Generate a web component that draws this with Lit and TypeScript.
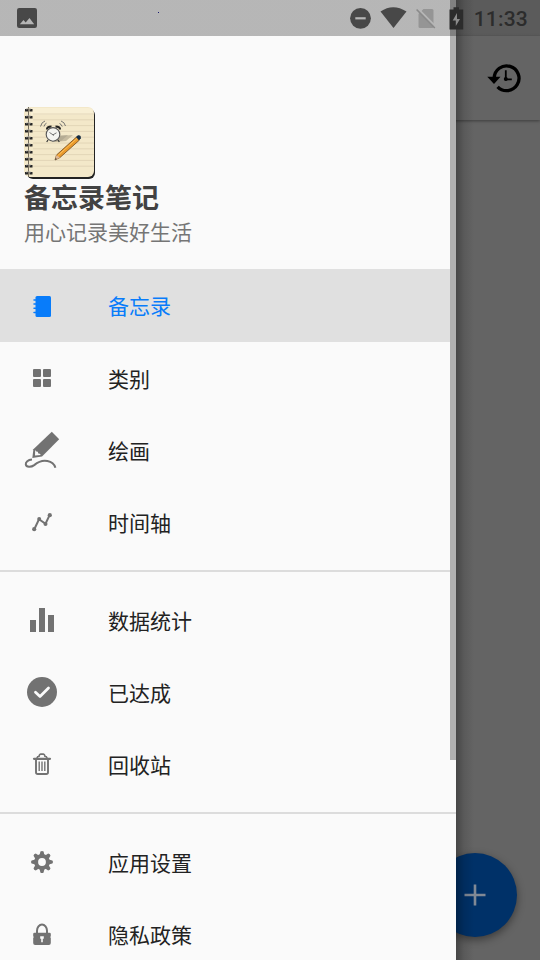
import { LitElement, html, css, svg, nothing } from "lit";
import { customElement, property } from "lit/decorators.js";

// Menu glyphs share a 48x48 box.
const glyphs: Record<string, unknown> = {
  notebook: svg`<path fill="currentColor" d="M19 14h12.5q1.5 0 1.5 1.5v18q0 1.5-1.5 1.5H19q-1.5 0-1.5-1.5v-18q0-1.5 1.5-1.5z"/>
    <path stroke="currentColor" stroke-width="1.5" stroke-linecap="round" d="M16 18h2M16 22h2M16 26.2h2M16 30.4h2"/>`,
  grid: svg`<g fill="currentColor"><rect x="15" y="15" width="8" height="8" rx="1"/><rect x="25" y="15" width="8" height="8" rx="1"/><rect x="15" y="25" width="8" height="8" rx="1"/><rect x="25" y="25" width="8" height="8" rx="1"/></g>`,
  draw: svg`<path fill="currentColor" d="M33.8 5.8 41.2 13.3 24 30.4 14.3 32 15.4 23.2z"/>
    <path fill="#fafafa" d="M17.2 24 17 29.6 22.8 28.9 21.8 27.7 20.3 27.4 19.8 25.8 18.3 25.4z"/>
    <path fill="none" stroke="currentColor" stroke-width="2" d="M14 33.5C10 33.8 7.4 36 7.8 38.5c.5 2.9 5.2 2.9 8.4.6 4.2-3.4 8.5-5 13.2-4 4.2.9 7 3.4 8 6.6"/>`,
  timeline: svg`<path fill="none" stroke="currentColor" stroke-width="2" d="M16.3 31.2 21 21.2 27.5 25.8 31.5 17.4"/>
    <g fill="currentColor"><circle cx="16.2" cy="31.2" r="2.1"/><circle cx="21.2" cy="21" r="2"/><circle cx="27.5" cy="26" r="2"/><circle cx="31.8" cy="17.2" r="2.1"/></g>`,
  bars: svg`<path fill="currentColor" d="M12 24h6v12h-6zM21 12h6v24h-6zM30 19h6v17h-6z"/>`,
  check: svg`<circle cx="24" cy="24" r="15" fill="currentColor"/><path fill="none" stroke="#fafafa" stroke-width="2.8" stroke-linecap="round" stroke-linejoin="round" d="M17.5 24.3 22 28.6 30.5 20"/>`,
  trash: svg`<g fill="none" stroke="currentColor"><path stroke-width="2.2" stroke-linecap="round" d="M16 18.8h16"/><path stroke-width="1.8" d="M19 18.2q.5-2 2-2 .6-2 1.5-2h3q.9 0 1.5 2 1.5 0 2 2"/><path stroke-width="1.9" d="M18 20v12.2q0 1.8 1.8 1.8h8.4q1.8 0 1.8-1.8V20"/><path stroke-width="1.4" d="M21.2 21.5v9.5M24 21.5v9.5M26.8 21.5v9.5"/></g>`,
  gear: svg`<circle cx="24" cy="24" r="5.9" fill="none" stroke="currentColor" stroke-width="4"/>
    <g fill="currentColor">${[0, 45, 90, 135, 180, 225, 270, 315].map(
      (a) => svg`<path transform=${`rotate(${a} 24 24)`} d="M21.5 17.5 22.4 13.6q1.6-1.3 3.2 0L26.5 17.5z"/>`
    )}</g>`,
  lock: svg`<path fill="none" stroke="currentColor" stroke-width="2" d="M19 23.5v-2.8c0-3 2.3-6.2 5-6.2s5 3.2 5 6.2v2.8"/>
    <path fill="currentColor" d="M16.5 22.8h15q1.3 0 1.3 1.3v2.2l-.6.8.6.8v5.2q0 1.9-1.9 1.9H17.1q-1.9 0-1.9-1.9v-5.2l.6-.8-.6-.8v-2.2q0-1.3 1.3-1.3z"/>
    <path fill="#fafafa" d="M22.2 26.2h3.6v2.5h-1v3.6h-1.6v-3.6h-1z"/>`,
};

@customElement("menu-row")
class MenuRow extends LitElement {
  @property() icon = "";
  @property() label = "";
  @property({ type: Boolean, reflect: true }) selected = false;

  static styles = css`
    :host { display: flex; align-items: center; height: 72px; padding-left: 18px; color: #727272; box-sizing: border-box; }
    :host([selected]) { background: #e0e0e0; color: #087cfa; height: 73px; }
    svg { width: 48px; height: 48px; flex: none; }
    .label { margin-left: 42px; padding-top: 3px; font-size: 21px; line-height: 30px; color: #222; }
    :host([selected]) .label { color: #087cfa; }
  `;

  render() {
    return html`<svg viewBox="0 0 48 48">${glyphs[this.icon] ?? nothing}</svg><span class="label">${this.label}</span>`;
  }
}

const groups = [
  [["notebook", "备忘录"], ["grid", "类别"], ["draw", "绘画"], ["timeline", "时间轴"]],
  [["bars", "数据统计"], ["check", "已达成"], ["trash", "回收站"]],
  [["gear", "应用设置"], ["lock", "隐私政策"]],
];

@customElement("app-root")
class AppRoot extends LitElement {
  static styles = css`
    :host { display: block; position: relative; width: 540px; height: 960px; overflow: hidden; background: #646464; font-family: Roboto, "Noto Sans CJK SC", sans-serif; }
    .page { display: flex; flex-direction: column; height: 960px; }
    .toolbar { display: flex; justify-content: flex-end; align-items: center; height: 84px; margin-top: 36px; padding-right: 18px; background: #646464; box-shadow: 0 1px 3px rgba(0,0,0,.4); }
    .toolbar svg { width: 36px; height: 32px; }
    .fab { position: absolute; right: 23px; bottom: 23px; width: 84px; height: 84px; border-radius: 50%; background: #003168; box-shadow: 0 3px 8px rgba(0,0,0,.42); display: grid; place-items: center; }
    .fab svg { width: 22px; height: 22px; }
    .drawer { position: absolute; left: 0; top: 0; width: 456px; height: 960px; overflow: hidden; background: #fafafa; }
    .edge { position: absolute; left: 456px; top: 0; width: 18px; height: 960px; background: linear-gradient(90deg, rgba(0,0,0,.3), rgba(0,0,0,.1) 45%, transparent); }
    .head { box-sizing: border-box; height: 269px; padding: 106px 24px 0; }
    .logo { display: block; width: 72px; height: 74px; }
    .title { font-size: 27px; line-height: 34px; font-weight: 700; color: #424242; margin-top: 2px; }
    .sub { font-size: 21px; line-height: 30px; color: #757575; margin-top: 2px; }
    .rule { height: 2px; margin: 12px 0; background: #dcdcdc; }
    .thumb { position: absolute; right: 0; top: 0; width: 6px; height: 760px; background: #b0b0b0; }
    .status { position: absolute; left: 0; top: 0; width: 540px; height: 36px; box-sizing: border-box; display: flex; align-items: center; padding: 0 12px 0 17px; background: linear-gradient(90deg, rgba(0,0,0,.27) 456px, rgba(0,0,0,.09) 456px); color: #484848; }
    .status svg { flex: none; }
    .dot { width: 1px; height: 1px; margin: -11px 0 0 121px; background: #1a1a70; }
    .tray { display: flex; align-items: center; margin-left: auto; }
    .clock { padding-top: 1px; font-family: Roboto, sans-serif; font-size: 21px; line-height: 36px; font-weight: 500; letter-spacing: .2px; color: #2c2c2c; margin-left: 10px; }
  `;

  private logo() {
    const rings = Array.from({ length: 10 }, (_, i) => 4.2 + i * 7);
    return html`<svg class="logo" viewBox="0 0 72 74">
      <rect x="3" y="3" width="68" height="70" rx="6" fill="#222"/>
      <rect x="0" y="1" width="70" height="70" rx="6" fill="#f3e8c9"/>
      <path d="M7 2h57q5 0 5 5v2H7z" fill="#f8efd4"/>
      <path d="M9 8h61M9 13.8h61M9 19.6h61M9 25.4h61M9 31.2h61M9 37h61M9 42.8h61M9 48.6h61M9 54.4h61M9 60.2h61" stroke="#ddd1b2" stroke-width=".8"/>
      <path d="M4.5 1v70" stroke="#665f50" stroke-width=".9"/>
      ${rings.map((y) => svg`<path d=${`M1 ${y}h3M5.5 ${y}h3`} stroke="#262626" stroke-width="2.5"/><path d=${`M2 ${y - 1}q3-1.5 5 0`} fill="none" stroke="#aaa" stroke-width=".7"/>`)}
      <path d="M33 30 49 29 42 35 30 36z" fill="#c6bba0"/>
      <path d="M31 30 44 29 37 35 28 36z" fill="#a9a08b" opacity=".6"/>
      <g fill="none" stroke="#666" stroke-width=".9"><path d="M16.5 20.5q1-4.5 4.5-5.5M20 20.5q.5-2.5 2.5-3.3M37 15q3.5 1 4.5 5M35.5 17.5q2 .8 2.7 3"/></g>
      <path d="M23 23.5q0-3 4.5-3M36 23.5q0-3-4.5-3" stroke="#222" stroke-width="2.2" fill="none"/>
      <path d="m24 34-1.3 2M34 34l1.3 2" stroke="#333" stroke-width="1.2"/>
      <circle cx="29" cy="28.4" r="6.8" fill="#f4f4f0" stroke="#555" stroke-width="1.1"/>
      <path d="m25.5 26.5 3.5 2.3 3.5-2M29 28.8l.5 1" stroke="#555" stroke-width=".8" fill="none"/>
      <path d="m31 54 1.5-5L52.5 31l3 3L36 51.5z" fill="#e99a2c" stroke="#704a1e" stroke-width=".8"/>
      <path d="M34 49.5 53.5 32" stroke="#ffc15a" stroke-width="1"/>
      <path d="m31 54 1.5-5 3.5 2.5z" fill="#dfb895"/><path d="m31 54 .6-2 1.3 1z" fill="#333"/>
      <path d="m52 31 2-1.7q3.3-.4 2.8 2.9L55 34.2z" fill="#142b42"/>
    </svg>`;
  }

  render() {
    return html`
      <div class="page">
        <div class="toolbar">
          <svg viewBox="0 0 36 32"><path d="M8.2 16A12.4 12.4 0 1 1 11.6 24.8" fill="none" stroke="#000" stroke-width="3.3"/><path d="M1.3 14.8h13.2L8 22z"/><path d="M19.8 8.2v9.2h6" fill="none" stroke="#000" stroke-width="1.8"/><circle cx="19.8" cy="17" r="2"/></svg>
        </div>
        <div class="fab"><svg viewBox="0 0 22 22"><path d="M11 .5v21M.5 11h21" stroke="#818995" stroke-width="2.6"/></svg></div>
      </div>
      <div class="edge"></div>
      <div class="drawer">
        <div class="head">
          ${this.logo()}
          <div class="title">备忘录笔记</div>
          <div class="sub">用心记录美好生活</div>
        </div>
        ${groups.map((g, gi) => html`${gi ? html`<div class="rule"></div>` : nothing}
          ${g.map(([icon, label], i) => html`<menu-row .icon=${icon} .label=${label} ?selected=${gi === 0 && i === 0}></menu-row>`)}`)}
        <div class="thumb"></div>
      </div>
      <div class="status">
        <svg width="20" height="20" viewBox="0 0 20 20"><rect width="20" height="20" rx="2.2" fill="#484848"/><path d="M2.8 16.2 6.5 12l2.2 2.5L12.5 10l4.7 6.2z" fill="#b6b6b6"/></svg>
        <div class="dot"></div>
        <div class="tray">
          <svg width="21" height="22" viewBox="0 0 21 22"><circle cx="10.5" cy="11.3" r="10.4" fill="#484848"/><path d="M5.3 11.3h10.4" stroke="#b6b6b6" stroke-width="2.2"/></svg>
          <svg width="27" height="22" viewBox="0 0 27 22" style="margin-left:9px"><path d="M.5 4.5Q13-4 26.5 4.5L13.5 21z" fill="#484848"/></svg>
          <svg width="20" height="21" viewBox="0 0 20 21" style="margin-left:9px"><path d="M7.5 1H16q1.5 0 1.5 1.5v16q0 1.5-1.5 1.5H4q-1.5 0-1.5-1.5V6z" fill="#959595"/><path d="M1.4.4 20 19.2" stroke="#b6b6b6" stroke-width="2.4"/><path d="M.6 1.5 18.8 20" stroke="#8a8a8a" stroke-width="1.7"/></svg>
          <svg width="15" height="23" viewBox="0 0 15 23" style="margin-left:13px"><path d="M.5 2.5h4V.3h5.5v2.2h4.2v20H.5z" fill="#2c2c2c"/><path d="M8 6v6h3L6.8 19v-5.6H3.7z" fill="#8c8c8c"/></svg>
          <span class="clock">11:33</span>
        </div>
      </div>`;
  }
}
